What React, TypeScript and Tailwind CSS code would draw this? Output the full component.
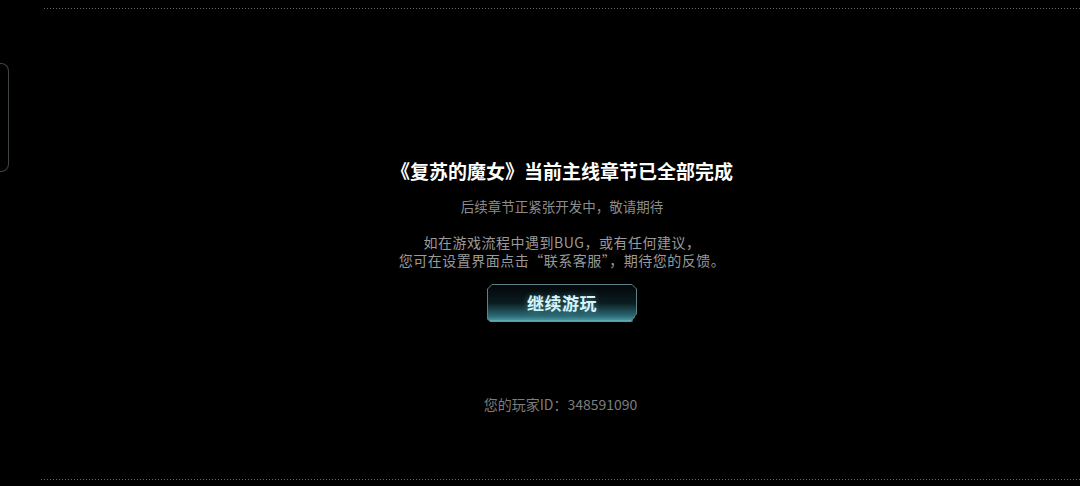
import { useState } from 'react'

const DOTS = 'h-px bg-[repeating-linear-gradient(to_right,#6b6b6b_0_1px,transparent_1px_3px)]'

function ContinueButton({ onClick }: { onClick: () => void }) {
  return (
    <button onClick={onClick} className="relative w-[150px] h-[38px] flex items-center justify-center">
      <svg className="absolute inset-0" width="150" height="38" viewBox="0 0 150 38">
        <defs>
          <linearGradient id="btnfill" x1="0" y1="0" x2="0" y2="1">
            <stop offset="0" stopColor="#030607" />
            <stop offset="0.5" stopColor="#0b1c21" />
            <stop offset="0.85" stopColor="#2b6973" />
            <stop offset="1" stopColor="#4ea3ae" />
          </linearGradient>
        </defs>
        <path
          d="M5 0.5 H145 L149.5 5 V30 L147.5 32 V33 L144 37.5 H3 L0.5 35 V5 Z"
          fill="url(#btnfill)"
          stroke="#5d8388"
          strokeWidth="1"
        />
        <path d="M3 37 H146" stroke="#7fc4cc" strokeWidth="1" opacity="0.7" />
      </svg>
      <span className="relative text-[17px] font-bold tracking-[0.5px] text-[#d6f5f9] [text-shadow:0_0_6px_rgba(120,220,235,0.45)]">
        继续游玩
      </span>
    </button>
  )
}

export default function App() {
  const [clicks, setClicks] = useState(0)

  return (
    <div className="w-[1080px] h-[486px] bg-black flex overflow-hidden font-['Noto_Sans_CJK_SC','Noto_Sans',sans-serif]">
      {/* side tab peeking in from the left edge */}
      <div className="w-[9px] h-[109px] mt-[63px] shrink-0 rounded-r-[8px] border border-l-0 border-[#3d473e]" />

      <div className="ml-[35px] flex-1 flex flex-col pt-[8px] pb-[6px]">
        <div className={DOTS} />

        <div className="flex-1 flex flex-col items-center pt-[150px]">
          <h1 className="text-[19px] leading-[24px] font-bold text-white">《复苏的魔女》当前主线章节已全部完成</h1>
          <p className="mt-[13px] text-[13.5px] leading-[20px] text-[#8c8c8c]">后续章节正紧张开发中，敬请期待</p>
          <div className="mt-[17px] text-[14px] leading-[18px] tracking-[0.5px] text-[#9a9a9a] text-center">
            <p>如在游戏流程中遇到BUG，或有任何建议，</p>
            <p>您可在设置界面点击“联系客服”，期待您的反馈。</p>
          </div>
          <div className="mt-[15px]">
            <ContinueButton onClick={() => setClicks((c) => c + 1)} />
          </div>
          <p className="mt-[72px] -ml-[3px] text-[14px] leading-[20px] text-[#7d7d7d]" data-clicks={clicks}>
            您的玩家ID：348591090
          </p>
        </div>

        <div className={`${DOTS} -ml-[3px]`} />
      </div>
    </div>
  )
}
